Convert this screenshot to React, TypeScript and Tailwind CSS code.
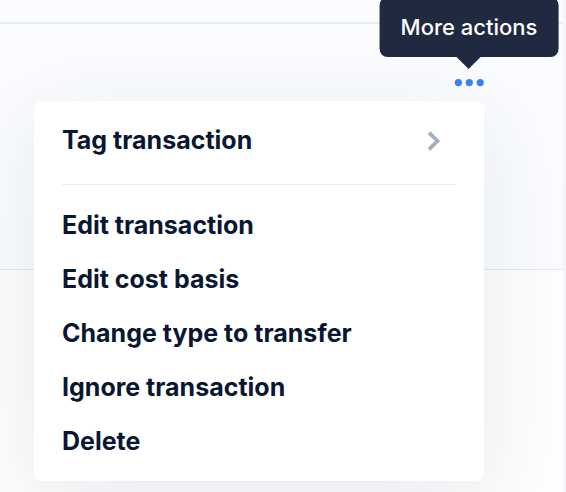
import React from 'react';
import { clsx } from 'clsx';

interface MenuItemProps {
  label: string;
  hasSubmenu?: boolean;
}

const actions = [
  'Edit transaction',
  'Edit cost basis',
  'Change type to transfer',
  'Ignore transaction',
  'Delete',
];

const ChevronIcon: React.FC = () => (
  <svg width="16" height="22" viewBox="0 0 16 22" fill="none" aria-hidden="true">
    <path d="M3 2.6L11.5 11L3 19.4" stroke="#a3afc4" strokeWidth="3.8" />
  </svg>
);

const DotsIcon: React.FC = () => (
  <svg width="30" height="8" viewBox="0 0 30 8" fill="#3b82f6" aria-hidden="true">
    <circle cx="4.4" cy="3.6" r="3.6" />
    <circle cx="15.3" cy="3.6" r="3.6" />
    <circle cx="26.2" cy="3.6" r="3.6" />
  </svg>
);

const MenuItem: React.FC<MenuItemProps> = ({ label, hasSubmenu }) => (
  <button
    type="button"
    role="menuitem"
    aria-haspopup={hasSubmenu ? 'menu' : undefined}
    className={clsx(
      'flex w-full items-center justify-between text-left text-[25px] font-bold text-[#0a1733]',
      hasSubmenu ? 'h-[79px] pr-3.5' : 'h-[54px]'
    )}
  >
    {label}
    {hasSubmenu && <ChevronIcon />}
  </button>
);

const Tooltip: React.FC = () => (
  <div
    id="more-actions-tip"
    role="tooltip"
    className="absolute bottom-full left-1/2 z-20 mb-[22px] -translate-x-1/2 rounded-lg bg-[#1f2940] px-[21px] py-3.5 text-[22px] leading-8 font-medium whitespace-nowrap text-white"
  >
    More actions
    <span className="absolute top-full left-1/2 -translate-x-1/2 border-x-12 border-t-12 border-x-transparent border-t-[#1f2940]" />
  </div>
);

const ActionsMenu: React.FC = () => (
  <div
    role="menu"
    className="absolute top-full right-0 z-10 mt-3.5 w-[450px] rounded-lg bg-white px-7 pb-3 shadow-[0_20px_90px_rgba(25,50,85,0.10)]"
  >
    <MenuItem label="Tag transaction" hasSubmenu />
    <hr className="mt-1 mb-3.5 border-[#eceef1]" />
    {actions.map((label) => (
      <MenuItem key={label} label={label} />
    ))}
  </div>
);

export default function App() {
  return (
    <main className="h-screen overflow-hidden border-r-3 border-[#f3f4f9] bg-[#fefefe] font-['Inter','Liberation_Sans',sans-serif]">
      <div className="h-6 border-b-2 border-[#e7eaee] bg-[#fbfcff]" />
      <div className="flex h-[246px] justify-end border-b border-[#e2e5ed] bg-[#fafcff] pt-[55px] pr-[79px]">
        <div className="relative h-2">
          <button type="button" aria-label="More actions" aria-describedby="more-actions-tip" className="block">
            <DotsIcon />
          </button>
          <Tooltip />
          <ActionsMenu />
        </div>
      </div>
    </main>
  );
}
